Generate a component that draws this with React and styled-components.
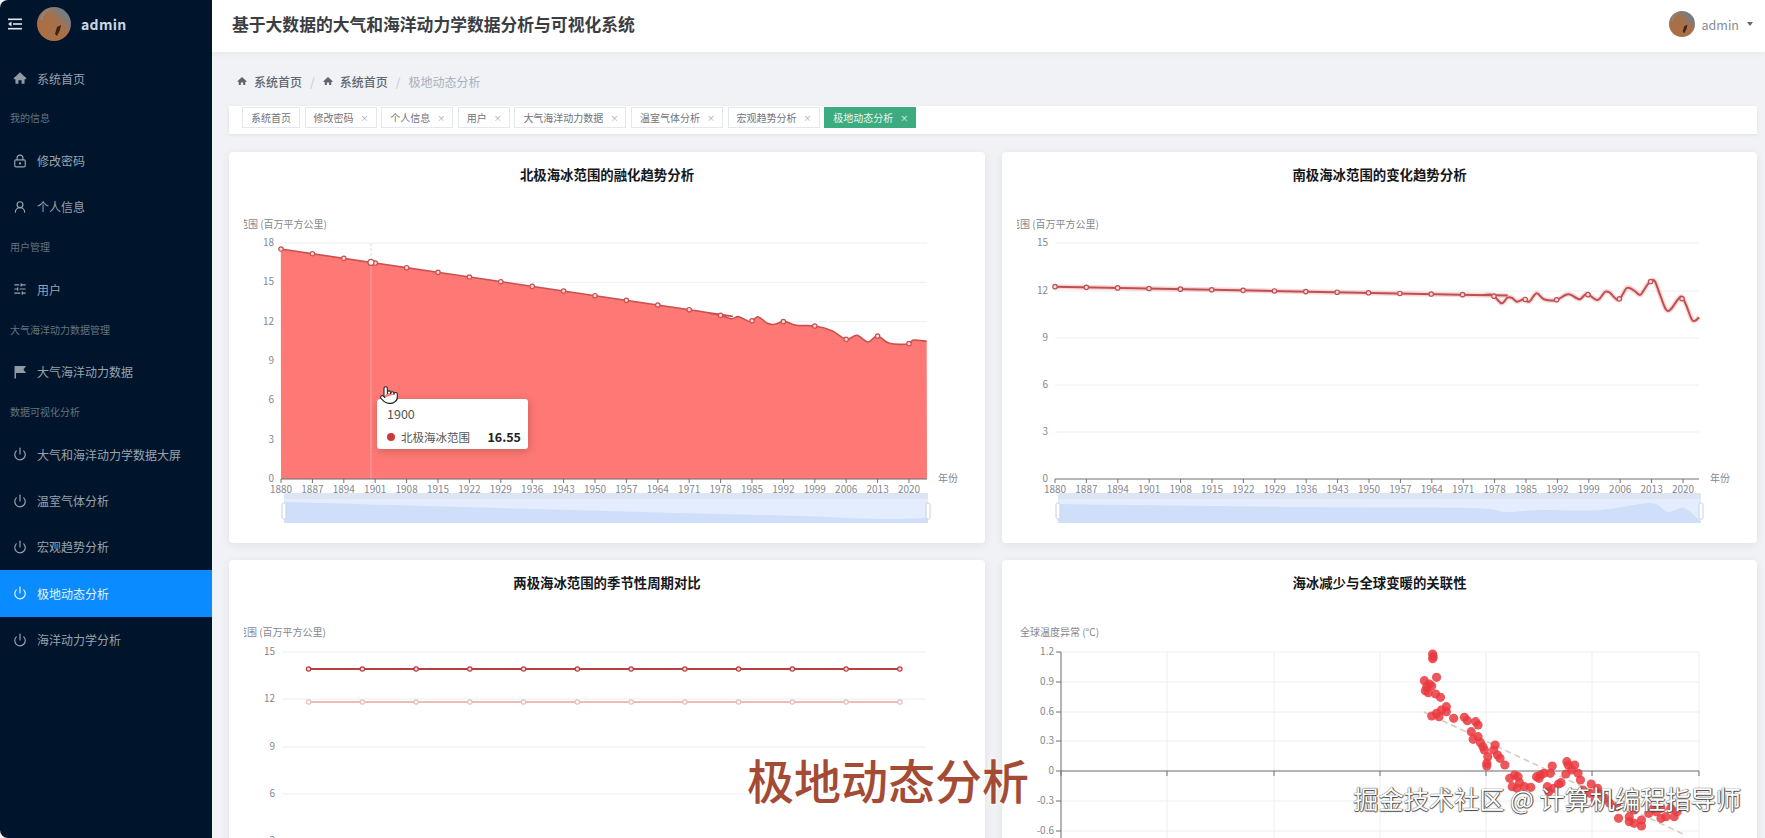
import React from 'react'
import styled, { createGlobalStyle } from 'styled-components'
import { LockKeyhole, UserRound, SlidersHorizontal, Power, Pointer } from 'lucide-react'

const GlobalStyle = createGlobalStyle`
    html, body {
        margin: 0;
        padding: 0;
        background: #fff;
        font-family: 'Noto Sans CJK SC', 'Noto Sans', sans-serif;
    }
`

const Page = styled.div`
    position: relative;
    display: flex;
    width: 100%;
    height: 100vh;
    overflow: hidden;
    background: #f0f2f5;
`

const Sidebar = styled.aside`
    flex: 0 0 212px;
    height: 100%;
    background: #00152b;
    border-top-left-radius: 8px;
    border-bottom-left-radius: 8px;
`

const SideTop = styled.div`
    display: flex;
    align-items: center;
    gap: 15px;
    height: 55px;
    padding: 0 0 7px 8px;
    box-sizing: border-box;
`

const AdminName = styled.span`
    margin-left: -5px;
    font-size: 14px;
    font-weight: 700;
    color: #c9d6e2;
    letter-spacing: 0.3px;
`

const GroupLabel = styled.div`
    height: 36px;
    padding: 0 0 3px 10px;
    box-sizing: border-box;
    display: flex;
    align-items: center;
    font-size: 10px;
    color: #66737f;
`

const MenuItem = styled.div`
    display: flex;
    align-items: center;
    height: 46.4px;
    padding-left: 13px;
    gap: 10px;
    font-size: 12px;
    color: ${p => (p.$active ? '#e6f3ff' : '#98a3ae')};
    background: ${p => (p.$active ? '#0a8bff' : 'transparent')};
    svg {
        flex: 0 0 14px;
    }
`

const Main = styled.div`
    flex: 1;
    min-width: 0;
    display: flex;
    flex-direction: column;
`

const Header = styled.header`
    flex: 0 0 52px;
    display: flex;
    align-items: center;
    justify-content: space-between;
    padding: 0 12px 4px 20px;
    box-sizing: border-box;
    background: #fff;
    box-shadow: 0 1px 6px rgba(0, 21, 41, 0.06);
`

const AppTitle = styled.h1`
    margin: 0;
    font-size: 16.8px;
    font-weight: 600;
    color: #3a3d42;
`

const UserBox = styled.div`
    display: flex;
    align-items: center;
    font-size: 12.5px;
    color: #868b93;
    span {
        margin-left: 7px;
    }
`

const Caret = styled.i`
    margin-left: 8px;
    border-left: 3.5px solid transparent;
    border-right: 3.5px solid transparent;
    border-top: 4px solid #666;
`

const Content = styled.main`
    flex: 1;
    min-height: 0;
    padding: 0 8px 0 17px;
`

const Breadcrumb = styled.nav`
    display: flex;
    align-items: center;
    height: 54px;
    padding: 4px 0 0 8px;
    box-sizing: border-box;
    font-size: 12px;
    color: #60666f;
    font-weight: 500;
    svg {
        margin-right: 7px;
    }
`

const Slash = styled.span`
    margin: 0 8px;
    color: #c5c9d0;
    font-weight: 400;
`

const CrumbLast = styled.span`
    color: #a8b0bf;
    font-weight: 400;
`

const TagsBar = styled.div`
    display: flex;
    align-items: flex-start;
    gap: 4.6px;
    height: 28px;
    padding: 1px 0 0 13px;
    box-sizing: border-box;
    margin-bottom: 18px;
    background: #fff;
    box-shadow: 0 1px 3px rgba(0, 21, 41, 0.08);
`

const Tag = styled.div`
    display: flex;
    align-items: center;
    height: 21px;
    padding: 0 8px;
    box-sizing: border-box;
    font-size: 10px;
    color: ${p => (p.$active ? '#e8f7f0' : '#6f747c')};
    background: ${p => (p.$active ? '#3dab80' : '#fff')};
    border: 1px solid ${p => (p.$active ? '#3dab80' : '#e4e7ed')};
`

const TagClose = styled.span`
    width: 7px;
    margin-left: 7px;
    font-size: 8px;
    text-align: center;
    color: ${p => (p.$active ? '#fff' : '#a0a4ab')};
`

const CardGrid = styled.div`
    display: grid;
    grid-template-columns: 756px 755px;
    grid-auto-rows: 391px;
    gap: 17px;
`

const Card = styled.section`
    padding-top: 14px;
    box-sizing: border-box;
    background: #fff;
    border-radius: 4px;
    box-shadow: 0 2px 10px rgba(0, 21, 41, 0.07);
`

const CardTitle = styled.h2`
    margin: 0 0 18px;
    font-size: 13.4px;
    line-height: 16px;
    font-weight: 700;
    text-align: center;
    color: #15171a;
`

const ChartSvg = styled.svg`
    display: block;
    margin-left: ${p => p.$inset}px;
    overflow: hidden;
    text {
        font-family: 'Noto Sans CJK SC', 'Noto Sans', sans-serif;
        font-size: 10px;
        fill: #84888f;
    }
`

const Tooltip = styled.div`
    position: absolute;
    left: 377px;
    top: 399px;
    width: 151px;
    height: 50px;
    padding: 5px 7px 0 10px;
    box-sizing: border-box;
    background: #fff;
    border-radius: 3px;
    box-shadow: 1px 2px 8px rgba(0, 0, 0, 0.2);
    font-size: 12.5px;
    color: #555;
`

const TipRow = styled.div`
    display: flex;
    align-items: center;
    margin-top: 4px;
    font-size: 11.5px;
    strong {
        margin-left: auto;
        color: #222;
        font-size: 12.5px;
    }
`

const TipDot = styled.i`
    width: 8px;
    height: 8px;
    margin-right: 6px;
    border-radius: 50%;
    background: #cc3b3b;
`

const CursorMark = styled.div`
    position: absolute;
    left: 379px;
    top: 385px;
    line-height: 0;
`

const Overlay = styled.div`
    position: absolute;
    left: 747px;
    top: 747px;
    font-size: 47px;
    line-height: 64px;
    font-weight: 500;
    color: #a44b35;
    text-shadow: 0 0 3px #fff, 0 0 3px #fff;
`

const Watermark = styled.div`
    position: absolute;
    right: 24px;
    top: 780px;
    font-size: 25.2px;
    line-height: 36px;
    font-weight: 400;
    color: #fff;
    white-space: pre;
    text-shadow: 0 0 1px #444, 0 1px 1px #444, 1px 0 1px #444;
`

// smooth line through page coordinates
const smooth = pts => {
    let d = `M${pts[0][0]},${pts[0][1]}`
    for (let i = 0; i < pts.length - 1; i++) {
        const p0 = pts[i - 1] || pts[i]
        const p1 = pts[i]
        const p2 = pts[i + 1]
        const p3 = pts[i + 2] || p2
        const c1 = [p1[0] + (p2[0] - p0[0]) / 6, p1[1] + (p2[1] - p0[1]) / 6]
        const c2 = [p2[0] - (p3[0] - p1[0]) / 6, p2[1] - (p3[1] - p1[1]) / 6]
        d += ` C${c1[0].toFixed(1)},${c1[1].toFixed(1)} ${c2[0].toFixed(1)},${c2[1].toFixed(1)} ${p2[0].toFixed(1)},${p2[1].toFixed(1)}`
    }
    return d
}

const YEARS = Array.from({ length: 21 }, (_, i) => 1880 + i * 7)

const arcticPts = [[148, 597], [1020, 783], [1045, 790], [1067, 796], [1090, 806], [1105, 800], [1130, 815], [1145, 800], [1165, 820], [1180, 823], [1200, 814], [1225, 826], [1265, 828], [1300, 842], [1330, 868], [1352, 856], [1375, 876], [1395, 858], [1420, 880], [1460, 882], [1470, 870], [1498, 874]]
    .map(([x, y]) => [210 + x / 2.09, 50 + y / 3])

const antarcticPts = [[112, 260], [970, 284.6], [990, 285], [1010, 285], [1028, 310], [1040, 293], [1050, 294], [1060, 305], [1075, 297], [1085, 305], [1100, 280], [1115, 298], [1140, 300], [1160, 284], [1170, 284], [1188, 298], [1203, 282], [1225, 300], [1240, 276], [1250, 278], [1268, 300], [1285, 264], [1300, 272], [1312, 285], [1320, 270], [1332, 245], [1342, 243], [1352, 280], [1365, 328], [1375, 328], [1395, 290], [1405, 310], [1418, 358], [1425, 362], [1433, 352]]
    .map(([x, y]) => [1000 + x / 2.05, 200 + y / 3])

const scatterPts = [[887, 282], [888, 290], [887, 296], [870, 362], [880, 372], [895, 352], [875, 380], [872, 392], [885, 378], [878, 398], [893, 402], [903, 412], [915, 440], [905, 450], [895, 460], [885, 468], [900, 470], [915, 455], [930, 475], [952, 472], [958, 482], [975, 485], [980, 495], [966, 515], [980, 530], [970, 538], [985, 548], [990, 560], [993, 570], [1015, 555], [1012, 570], [1000, 590], [1020, 585], [1025, 595], [998, 610], [1035, 615], [998, 618], [1055, 645], [1045, 655], [1062, 650], [1065, 668], [1050, 680], [1075, 680], [1088, 682], [1060, 685], [1100, 650], [1108, 645], [1115, 640], [1105, 655], [1132, 618], [1128, 640], [1122, 680], [1135, 685], [1150, 668], [1145, 672], [1125, 695], [1162, 605], [1165, 615], [1178, 615], [1172, 630], [1160, 642], [1185, 640], [1190, 660], [1212, 672], [1225, 685], [1195, 690], [1210, 700], [1228, 700], [1220, 720], [1240, 715], [1250, 730], [1265, 740], [1268, 775], [1290, 785], [1300, 750], [1315, 780], [1315, 798], [1330, 760], [1345, 755], [1355, 775], [1365, 770], [1382, 770], [1388, 755], [1375, 745], [1300, 790], [1290, 770], [1340, 745], [1355, 745]]
    .map(([x, y]) => [1000 + x / 2.05, 560 + y / 3])

const yOnLine = (pts, x) => {
    for (let i = 0; i < pts.length - 1; i++) {
        if (x >= pts[i][0] && x <= pts[i + 1][0]) {
            const t = (x - pts[i][0]) / (pts[i + 1][0] - pts[i][0])
            return pts[i][1] + (pts[i + 1][1] - pts[i][1]) * t
        }
    }
    return pts[pts.length - 1][1]
}

const Grid = ({ left, right, labelX, rows }) => (
    <>
        {rows.map(([label, y]) => (
            <g key={label}>
                <line x1={left} x2={right} y1={y} y2={y} stroke="#eceef1" />
                <text x={labelX} y={y + 3} textAnchor="end">{label}</text>
            </g>
        ))}
    </>
)

const YearAxis = ({ left, right, y }) => (
    <>
        <line x1={left} x2={right} y1={y} y2={y} stroke="#6e7079" />
        {YEARS.map((year, i) => {
            const x = left + i * 31.4
            return (
                <g key={year}>
                    <line x1={x} x2={x} y1={y} y2={y + 4} stroke="#6e7079" />
                    <text x={x} y={y + 14} textAnchor="middle">{year}</text>
                </g>
            )
        })}
        <text x={right + 11} y={y + 3}>年份</text>
    </>
)

const DataZoom = ({ left, right, shadow }) => {
    const y = [493, 523]
    return (
        <>
            <rect x={left} y={y[0]} width={right - left} height={30} fill="#e3edfd" />
            <path d={`${smooth(shadow)} L${right},${y[1]} L${left},${y[1]} Z`} fill="#cfdffa" />
            <rect x={left} y={y[0]} width={right - left} height={6} fill="#dde4f2" />
            <rect x={left - 2} y={503} width={4} height={16} rx={1.5} fill="#fff" stroke="#c6d0de" />
            <rect x={right - 2} y={503} width={4} height={16} rx={1.5} fill="#fff" stroke="#c6d0de" />
        </>
    )
}

const Marker = ({ x, y, r = 2.2, color = '#c9504f', fill = '#ffd9d6' }) => (
    <circle cx={x} cy={y} r={r} fill={fill} stroke={color} strokeWidth={1.2} />
)

const ArcticChart = () => {
    const rows = [[18, 243], [15, 282.3], [12, 321.7], [9, 361], [6, 400.3], [3, 439.7], [0, 479]]
    const line = smooth(arcticPts)
    return (
        <ChartSvg $inset={15} width="741" height="335" viewBox="244 200 741 335">
            <text x={327} y={228} textAnchor="end">范围 (百万平方公里)</text>
            <Grid left={281} right={927} labelX={274} rows={rows} />
            <path d={`${line} L927,479 L281,479 Z`} fill="#fe7875" />
            <path d={line} fill="none" stroke="#c9504f" strokeWidth={1.6} />
            <line x1={371} x2={371} y1={262} y2={479} stroke="#ffaaa6" strokeWidth={1} />
            <line x1={371} x2={371} y1={243} y2={261} stroke="#dcdcdc" strokeDasharray="3 2" />
            {YEARS.map((_, i) => {
                const x = 281 + i * 31.4
                return <Marker key={i} x={x} y={yOnLine(arcticPts, x)} />
            })}
            <Marker x={371} y={yOnLine(arcticPts, 371)} r={3} fill="#fff" />
            <YearAxis left={281} right={927} y={479} />
            <DataZoom left={284} right={928} shadow={[[284, 502], [500, 508], [720, 514], [800, 516], [880, 519], [928, 518]]} />
        </ChartSvg>
    )
}

const AntarcticChart = () => {
    const rows = [[15, 243], [12, 291], [9, 338], [6, 385], [3, 432]]
    const line = smooth(antarcticPts)
    return (
        <ChartSvg $inset={15} width="740" height="335" viewBox="1017 200 740 335">
            <text x={1099} y={228} textAnchor="end">范围 (百万平方公里)</text>
            <Grid left={1055} right={1699} labelX={1048} rows={rows} />
            <text x={1048} y={482} textAnchor="end">0</text>
            <path d={line} fill="none" stroke="#f3a8a4" strokeOpacity={0.45} strokeWidth={5} />
            <path d={line} fill="none" stroke="#bd4f55" strokeWidth={2} />
            {YEARS.map((_, i) => {
                const x = 1055 + i * 31.35
                return <Marker key={i} x={x} y={yOnLine(antarcticPts, x)} color="#bd4f55" />
            })}
            <YearAxis left={1055} right={1699} y={479} />
            <DataZoom left={1058} right={1701} shadow={[[1058, 504], [1300, 507], [1470, 508], [1505, 512], [1540, 510], [1600, 510], [1650, 503], [1668, 512], [1684, 508], [1701, 522]]} />
        </ChartSvg>
    )
}

const MONTHS = Array.from({ length: 12 }, (_, i) => 308.6 + i * 53.75)

const SeasonChart = () => {
    const rows = [[15, 652], [12, 699], [9, 747], [6, 794], [3, 841]]
    return (
        <ChartSvg $inset={15} width="741" height="230" viewBox="244 608 741 230">
            <text x={326} y={636} textAnchor="end">范围 (百万平方公里)</text>
            <Grid left={282} right={926} labelX={275} rows={rows} />
            <line x1={308.6} x2={900} y1={669} y2={669} stroke="#b5403f" strokeWidth={2} />
            <line x1={308.6} x2={900} y1={702} y2={702} stroke="#ecbcb7" strokeWidth={2} />
            {MONTHS.map(x => (
                <g key={x}>
                    <Marker x={x} y={669} color="#b5403f" />
                    <Marker x={x} y={702} color="#ecbcb7" fill="#fff" />
                </g>
            ))}
        </ChartSvg>
    )
}

const ScatterChart = () => {
    const rows = [['1.2', 652], ['0.9', 682], ['0.6', 712], ['0.3', 741], ['0', 771], ['-0.3', 801], ['-0.6', 831]]
    const cols = [1061, 1167, 1274, 1380, 1486, 1592, 1699]
    return (
        <ChartSvg $inset={13} width="742" height="230" viewBox="1015 608 742 230">
            <text x={1020} y={636}>全球温度异常 (°C)</text>
            <Grid left={1061} right={1699} labelX={1054} rows={rows} />
            {cols.map(x => (
                <g key={x}>
                    <line x1={x} x2={x} y1={652} y2={838} stroke="#eceef1" />
                    <line x1={x} x2={x} y1={771} y2={776} stroke="#6e7079" />
                </g>
            ))}
            <line x1={1061} x2={1061} y1={652} y2={838} stroke="#6e7079" />
            <line x1={1061} x2={1699} y1={771} y2={771} stroke="#6e7079" />
            {rows.map(([label, y]) => (
                <line key={label} x1={1056} x2={1061} y1={y} y2={y} stroke="#6e7079" />
            ))}
            <line x1={1424} x2={1683} y1={712} y2={834} stroke="#d9c9bd" strokeWidth={1.6} strokeDasharray="6 4" />
            {scatterPts.map(([x, y], i) => (
                <circle key={i} cx={x} cy={y} r={4.6} fill="#ea3a3f" fillOpacity={0.85} />
            ))}
        </ChartSvg>
    )
}

const Avatar = ({ size, id }) => (
    <svg width={size} height={size} viewBox="0 0 34 34">
        <defs>
            <linearGradient id={id} x1="0" y1="1" x2="1" y2="0">
                <stop offset="0.55" stopColor="#a96f47" />
                <stop offset="0.85" stopColor="#6f7f8c" />
            </linearGradient>
        </defs>
        <circle cx="17" cy="17" r="17" fill={`url(#${id})`} />
        <path d="M3 12 C5 5 10 2 15 1 C9 4 6 8 5 14 Z" fill="#7d8b93" />
        <path d="M20 20 L24 18 L23 23 L20 29 L18 27 Z" fill="#3a2318" />
    </svg>
)

const HomeIcon = ({ size, color }) => (
    <svg width={size} height={size} viewBox="0 0 16 16" fill={color}>
        <path d="M8 1.5 L15 8 L15 9.5 L13.2 9.5 L13.2 14.5 L9.8 14.5 L9.8 10.5 L6.2 10.5 L6.2 14.5 L2.8 14.5 L2.8 9.5 L1 9.5 L1 8 Z" />
    </svg>
)

const FlagIcon = () => (
    <svg width="14" height="14" viewBox="0 0 14 14" fill="#8f9aa5">
        <path d="M1.5 1 H13 L10.5 4.5 L13 8 H3 V13.5 H1.5 Z" />
    </svg>
)

const OutdentIcon = () => (
    <svg width="14" height="12" viewBox="0 0 14 12" fill="#dfe7ee">
        <rect x="0" y="0.5" width="14" height="1.6" />
        <rect x="5" y="5.2" width="9" height="1.6" />
        <rect x="0" y="9.9" width="14" height="1.6" />
        <path d="M0 6 L3.5 3.6 V8.4 Z" />
    </svg>
)

const MENU = [
    { icon: <HomeIcon size={14} color="#8f9aa5" />, label: '系统首页' },
    { group: '我的信息' },
    { icon: <LockKeyhole size={14} />, label: '修改密码' },
    { icon: <UserRound size={14} />, label: '个人信息' },
    { group: '用户管理' },
    { icon: <SlidersHorizontal size={14} />, label: '用户' },
    { group: '大气海洋动力数据管理' },
    { icon: <FlagIcon />, label: '大气海洋动力数据' },
    { group: '数据可视化分析' },
    { icon: <Power size={14} />, label: '大气和海洋动力学数据大屏' },
    { icon: <Power size={14} />, label: '温室气体分析' },
    { icon: <Power size={14} />, label: '宏观趋势分析' },
    { icon: <Power size={14} />, label: '极地动态分析', active: true },
    { icon: <Power size={14} />, label: '海洋动力学分析' },
]

const TAGS = ['系统首页', '修改密码', '个人信息', '用户', '大气海洋动力数据', '温室气体分析', '宏观趋势分析', '极地动态分析']

const App = () => (
    <Page>
        <GlobalStyle />
        <Sidebar>
            <SideTop>
                <OutdentIcon />
                <Avatar size={34} id="avatar-side" />
                <AdminName>admin</AdminName>
            </SideTop>
            {MENU.map((item, i) =>
                item.group ? (
                    <GroupLabel key={i}>{item.group}</GroupLabel>
                ) : (
                    <MenuItem key={i} $active={item.active}>
                        {item.icon}
                        {item.label}
                    </MenuItem>
                )
            )}
        </Sidebar>
        <Main>
            <Header>
                <AppTitle>基于大数据的大气和海洋动力学数据分析与可视化系统</AppTitle>
                <UserBox>
                    <Avatar size={26} id="avatar-head" />
                    <span>admin</span>
                    <Caret />
                </UserBox>
            </Header>
            <Content>
                <Breadcrumb>
                    <HomeIcon size={10} color="#60666f" />
                    系统首页
                    <Slash>/</Slash>
                    <HomeIcon size={10} color="#60666f" />
                    系统首页
                    <Slash>/</Slash>
                    <CrumbLast>极地动态分析</CrumbLast>
                </Breadcrumb>
                <TagsBar>
                    {TAGS.map((tag, i) => (
                        <Tag key={tag} $active={i === TAGS.length - 1}>
                            {tag}
                            {i > 0 && <TagClose $active={i === TAGS.length - 1}>×</TagClose>}
                        </Tag>
                    ))}
                </TagsBar>
                <CardGrid>
                    <Card>
                        <CardTitle>北极海冰范围的融化趋势分析</CardTitle>
                        <ArcticChart />
                    </Card>
                    <Card>
                        <CardTitle>南极海冰范围的变化趋势分析</CardTitle>
                        <AntarcticChart />
                    </Card>
                    <Card>
                        <CardTitle>两极海冰范围的季节性周期对比</CardTitle>
                        <SeasonChart />
                    </Card>
                    <Card>
                        <CardTitle>海冰减少与全球变暖的关联性</CardTitle>
                        <ScatterChart />
                    </Card>
                </CardGrid>
            </Content>
        </Main>
        <Tooltip>
            1900
            <TipRow>
                <TipDot />
                北极海冰范围
                <strong>16.55</strong>
            </TipRow>
        </Tooltip>
        <CursorMark>
            <Pointer size={20} fill="#fff" color="#222" strokeWidth={1.3} />
        </CursorMark>
        <Overlay>极地动态分析</Overlay>
        <Watermark>掘金技术社区 @ 计算机编程指导师</Watermark>
    </Page>
)

export default App
